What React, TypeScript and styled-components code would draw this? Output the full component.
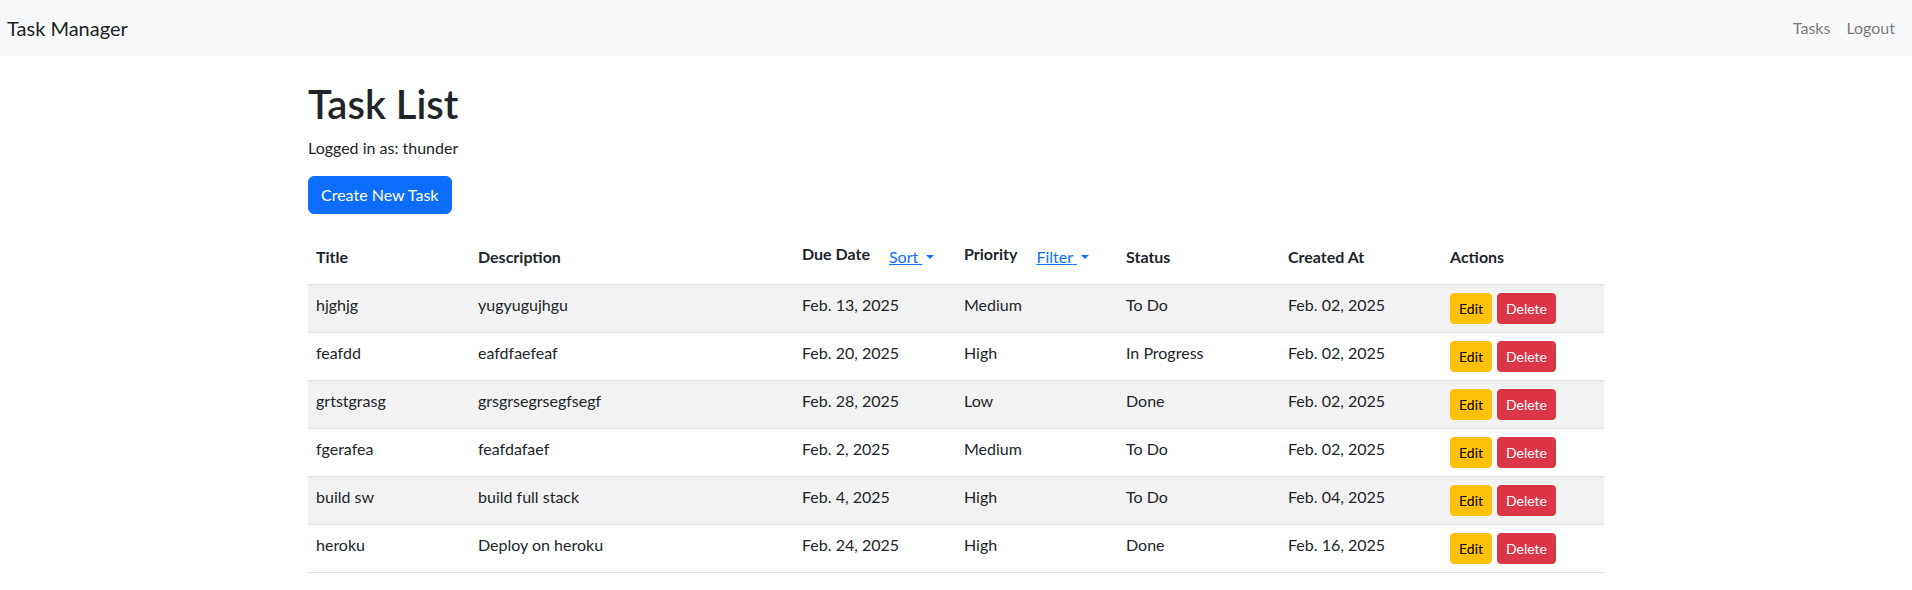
import React from "react";
import styled, { createGlobalStyle } from "styled-components";

const GlobalStyle = createGlobalStyle`
  *, *::before, *::after { box-sizing: border-box; }
  body {
    margin: 0;
    font-family: Lato, "Liberation Sans", sans-serif;
    font-size: 16px;
    line-height: 1.5;
    color: #212529;
    background: #fff;
  }
`;

const Navbar = styled.nav`
  display: flex;
  align-items: center;
  justify-content: space-between;
  height: 56px;
  padding: 8px 9px 8px 7px;
  background: #f8f9fa;
`;

const Brand = styled.a`
  font-size: 20px;
  line-height: 30px;
  padding: 5px 0;
  color: rgba(0, 0, 0, 0.9);
  text-decoration: none;
`;

const NavList = styled.div`
  display: flex;
  align-items: center;
`;

const NavLink = styled.a`
  padding: 8px;
  color: rgba(0, 0, 0, 0.55);
  text-decoration: none;
`;

const Container = styled.main`
  max-width: 1320px;
  margin: 24px auto 0;
  padding: 0 12px;
`;

const Title = styled.h1`
  margin: 0 0 8px;
  padding-top: 1px;
  font-size: 40px;
  font-weight: 600;
  line-height: 47px;
`;

const Subtitle = styled.p`
  margin: 0 0 16px;
`;

const PrimaryButton = styled.button`
  display: inline-block;
  height: 38px;
  padding: 6px 12px;
  font-family: inherit;
  font-size: 16px;
  line-height: 24px;
  color: #fff;
  background: #0d6efd;
  border: 1px solid #0d6efd;
  border-radius: 6px;
  cursor: pointer;
`;

const ButtonRow = styled.div`
  margin-bottom: 16px;
`;

const Table = styled.table`
  width: 100%;
  border-collapse: collapse;
  table-layout: fixed;
`;

const Col = styled.col<{ $wide?: boolean }>`
  width: ${(p) => (p.$wide ? "25%" : "12.5%")};
`;

const Th = styled.th`
  padding: 8px;
  text-align: left;
  font-weight: 700;
  vertical-align: middle;
  border-bottom: 1px solid #dee2e6;
`;

const HeadFlex = styled.div`
  display: flex;
  align-items: center;
`;

const HeadLabel = styled.span`
  margin-bottom: 6px;
  margin-right: 6px;
`;

const DropToggle = styled.button`
  height: 38px;
  padding: 6px 12px;
  font-family: inherit;
  font-size: 16px;
  line-height: 24px;
  color: #0d6efd;
  background: transparent;
  border: 1px solid transparent;
  text-decoration: underline;
  cursor: pointer;
  white-space: nowrap;
`;

const Caret = styled.span`
  display: inline-block;
  margin-left: 4px;
  vertical-align: 4px;
  border-top: 4.8px solid #0d6efd;
  border-left: 4.8px solid transparent;
  border-right: 4.8px solid transparent;
  border-bottom: 0;
`;

const Tr = styled.tr<{ $striped: boolean }>`
  background: ${(p) => (p.$striped ? "#f2f2f2" : "#fff")};
`;

const Td = styled.td`
  height: 48px;
  padding: 8px;
  vertical-align: top;
  border-bottom: 1px solid #dee2e6;
  white-space: nowrap;
`;

const Actions = styled.div`
  display: flex;
  gap: 5px;
`;

const SmallButton = styled.button<{ $variant: "warning" | "danger" }>`
  height: 31px;
  padding: 4px 8px;
  font-family: inherit;
  font-size: 14px;
  line-height: 21px;
  border-radius: 4px;
  cursor: pointer;
  color: ${(p) => (p.$variant === "warning" ? "#000" : "#fff")};
  background: ${(p) => (p.$variant === "warning" ? "#ffc107" : "#dc3545")};
  border: 1px solid ${(p) => (p.$variant === "warning" ? "#ffc107" : "#dc3545")};
`;

type Task = {
  title: string;
  description: string;
  due: string;
  priority: string;
  status: string;
  created: string;
};

const tasks: Task[] = [
  { title: "hjghjg", description: "yugyugujhgu", due: "Feb. 13, 2025", priority: "Medium", status: "To Do", created: "Feb. 02, 2025" },
  { title: "feafdd", description: "eafdfaefeaf", due: "Feb. 20, 2025", priority: "High", status: "In Progress", created: "Feb. 02, 2025" },
  { title: "grtstgrasg", description: "grsgrsegrsegfsegf", due: "Feb. 28, 2025", priority: "Low", status: "Done", created: "Feb. 02, 2025" },
  { title: "fgerafea", description: "feafdafaef", due: "Feb. 2, 2025", priority: "Medium", status: "To Do", created: "Feb. 02, 2025" },
  { title: "build sw", description: "build full stack", due: "Feb. 4, 2025", priority: "High", status: "To Do", created: "Feb. 04, 2025" },
  { title: "heroku", description: "Deploy on heroku", due: "Feb. 24, 2025", priority: "High", status: "Done", created: "Feb. 16, 2025" },
];

function DropdownHeader({ label, toggle }: { label: string; toggle: string }) {
  return (
    <HeadFlex>
      <HeadLabel>{label}</HeadLabel>
      <DropToggle type="button">
        {toggle}{" "}
        <Caret />
      </DropToggle>
    </HeadFlex>
  );
}

export default function App() {
  return (
    <>
      <GlobalStyle />
      <Navbar>
        <Brand href="#">Task Manager</Brand>
        <NavList>
          <NavLink href="#">Tasks</NavLink>
          <NavLink href="#">Logout</NavLink>
        </NavList>
      </Navbar>
      <Container>
        <Title>Task List</Title>
        <Subtitle>Logged in as: thunder</Subtitle>
        <ButtonRow>
          <PrimaryButton type="button">Create New Task</PrimaryButton>
        </ButtonRow>
        <Table>
          <colgroup>
            <Col />
            <Col $wide />
            <Col />
            <Col />
            <Col />
            <Col />
            <Col />
          </colgroup>
          <thead>
            <tr>
              <Th>Title</Th>
              <Th>Description</Th>
              <Th>
                <DropdownHeader label="Due Date" toggle="Sort" />
              </Th>
              <Th>
                <DropdownHeader label="Priority" toggle="Filter" />
              </Th>
              <Th>Status</Th>
              <Th>Created At</Th>
              <Th>Actions</Th>
            </tr>
          </thead>
          <tbody>
            {tasks.map((t, i) => (
              <Tr key={t.title} $striped={i % 2 === 0}>
                <Td>{t.title}</Td>
                <Td>{t.description}</Td>
                <Td>{t.due}</Td>
                <Td>{t.priority}</Td>
                <Td>{t.status}</Td>
                <Td>{t.created}</Td>
                <Td>
                  <Actions>
                    <SmallButton type="button" $variant="warning">Edit</SmallButton>
                    <SmallButton type="button" $variant="danger">Delete</SmallButton>
                  </Actions>
                </Td>
              </Tr>
            ))}
          </tbody>
        </Table>
      </Container>
    </>
  );
}
